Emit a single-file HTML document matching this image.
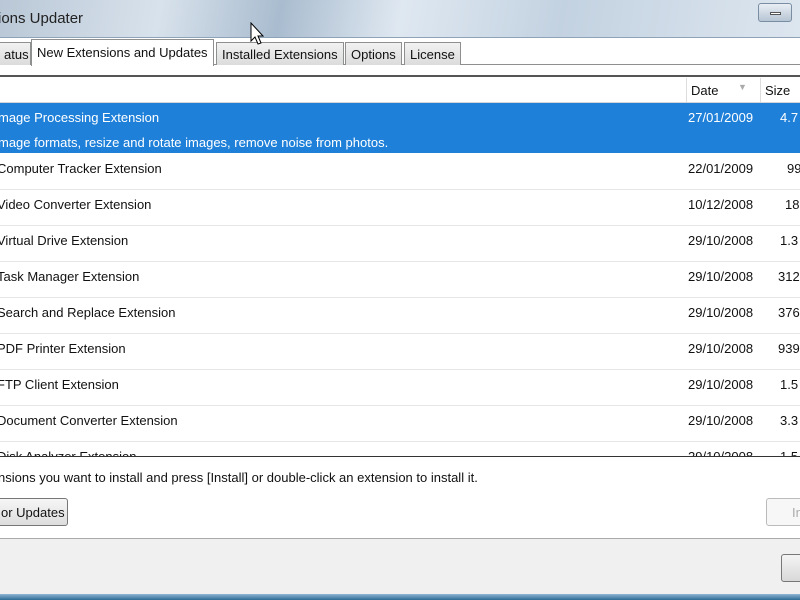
<!DOCTYPE html>
<html><head><style>
*{margin:0;padding:0;box-sizing:border-box}
body{width:800px;height:600px;overflow:hidden;font-family:"Liberation Sans",sans-serif;font-size:13px;color:#111;background:#fff;position:relative}
.abs{position:absolute;white-space:nowrap}
.title{left:0;top:0;width:800px;height:38px;background:linear-gradient(100deg,#b9c7d6 0%,#d8e2ec 20%,#a9bccf 35%,#dfe8f1 50%,#c3d2e1 70%,#dde6ef 100%);border-bottom:1px solid #8fa3b8}
.tab{top:42px;height:23px;border:1px solid #8e8f8f;border-bottom:none;background:linear-gradient(#f2f2f2,#dcdcdc);padding:4px 5px 0;font-size:13px}
.row{left:0;width:800px;height:36px;border-bottom:1px solid #e6e6e6}
</style></head><body>
<div class="abs title"></div>
<div class="abs" style="left:-2px;top:10px;font-size:15px;color:#222">ions Updater</div>
<div class="abs" style="left:758px;top:3px;width:34px;height:19px;border:1px solid #7a8ea3;border-radius:3px;background:linear-gradient(#e9eef4,#b7c5d4)"><div style="position:absolute;left:11px;top:8px;width:11px;height:3px;border:1px solid #555;background:#fff"></div></div>
<div class="abs" style="left:0;top:64px;width:800px;height:1px;background:#8e8f8f"></div>
<div class="abs tab" style="left:-2px;width:33px">atus</div>
<div class="abs tab" style="left:31px;top:39px;height:27px;background:#fff;padding-top:5px">New Extensions and Updates</div>
<div class="abs tab" style="left:216px">Installed Extensions</div>
<div class="abs tab" style="left:345px">Options</div>
<div class="abs tab" style="left:404px">License</div>
<div class="abs" style="left:0;top:75px;width:800px;height:2px;background:#555"></div>
<div class="abs" style="left:0;top:77px;width:800px;height:26px;background:#fff;border-bottom:1px solid #d5d5d5"></div>
<div class="abs" style="left:686px;top:78px;width:1px;height:24px;background:#ddd"></div>
<div class="abs" style="left:760px;top:78px;width:1px;height:24px;background:#ddd"></div>
<div class="abs" style="left:691px;top:83px">Date</div>
<div class="abs" style="left:738px;top:82px;color:#aaa;font-size:9px">▼</div>
<div class="abs" style="left:765px;top:83px">Size</div>
<div class="abs" style="left:0;top:103px;width:800px;height:50px;background:#1f80d9"></div>
<div class="abs" style="left:-2px;top:110px;color:#fff">mage Processing Extension</div>
<div class="abs" style="left:-2px;top:135px;color:#fff">mage formats, resize and rotate images, remove noise from photos.</div>
<div class="abs" style="left:688px;top:110px;color:#fff">27/01/2009</div>
<div class="abs" style="left:780px;top:110px;color:#fff">4.7</div>
<div class="abs row" style="top:154px"></div><div class="abs" style="left:-3px;top:161px">Computer Tracker Extension</div><div class="abs" style="left:688px;top:161px">22/01/2009</div><div class="abs" style="left:787px;top:161px">99</div>
<div class="abs row" style="top:190px"></div><div class="abs" style="left:-3px;top:197px">Video Converter Extension</div><div class="abs" style="left:688px;top:197px">10/12/2008</div><div class="abs" style="left:785px;top:197px">18</div>
<div class="abs row" style="top:226px"></div><div class="abs" style="left:-3px;top:233px">Virtual Drive Extension</div><div class="abs" style="left:688px;top:233px">29/10/2008</div><div class="abs" style="left:780px;top:233px">1.3</div>
<div class="abs row" style="top:262px"></div><div class="abs" style="left:-3px;top:269px">Task Manager Extension</div><div class="abs" style="left:688px;top:269px">29/10/2008</div><div class="abs" style="left:778px;top:269px">312</div>
<div class="abs row" style="top:298px"></div><div class="abs" style="left:-3px;top:305px">Search and Replace Extension</div><div class="abs" style="left:688px;top:305px">29/10/2008</div><div class="abs" style="left:778px;top:305px">376</div>
<div class="abs row" style="top:334px"></div><div class="abs" style="left:-3px;top:341px">PDF Printer Extension</div><div class="abs" style="left:688px;top:341px">29/10/2008</div><div class="abs" style="left:778px;top:341px">939</div>
<div class="abs row" style="top:370px"></div><div class="abs" style="left:-3px;top:377px">FTP Client Extension</div><div class="abs" style="left:688px;top:377px">29/10/2008</div><div class="abs" style="left:780px;top:377px">1.5</div>
<div class="abs row" style="top:406px"></div><div class="abs" style="left:-3px;top:413px">Document Converter Extension</div><div class="abs" style="left:688px;top:413px">29/10/2008</div><div class="abs" style="left:780px;top:413px">3.3</div>
<div class="abs" style="left:0;top:442px;width:800px;height:14px;overflow:hidden"><div class="abs" style="left:-3px;top:7px">Disk Analyzer Extension</div><div class="abs" style="left:688px;top:7px">29/10/2008</div><div class="abs" style="left:780px;top:7px">1.5</div></div>
<div class="abs" style="left:0;top:456px;width:800px;height:1px;background:#333"></div>
<div class="abs" style="left:-2px;top:470px">nsions you want to install and press [Install] or double-click an extension to install it.</div>
<div class="abs" style="left:-10px;top:498px;width:78px;height:28px;border:1px solid #777;border-radius:3px;background:linear-gradient(#f6f6f6,#ddd);padding:6px 0 0 10px">or Updates</div>
<div class="abs" style="left:766px;top:498px;width:40px;height:28px;border:1px solid #bbb;border-radius:3px;background:#f7f7f7;padding:6px 0 0 25px;color:#aaa">In</div>
<div class="abs" style="left:0;top:538px;width:800px;height:56px;background:#f0f0f0;border-top:1px solid #aaa"></div>
<div class="abs" style="left:781px;top:554px;width:30px;height:28px;border:1px solid #777;border-radius:3px;background:linear-gradient(#f4f4f4,#d8d8d8)"></div>
<div class="abs" style="left:0;top:594px;width:800px;height:6px;background:linear-gradient(#8fb5d3,#2f6b96)"></div>
<svg class="abs" style="left:250px;top:22px" width="16" height="26" viewBox="0 0 16 26"><path d="M1 1 L1 19 L5 15 L8 22 L11 21 L8 14 L13 14 Z" fill="#fff" stroke="#000" stroke-width="1"/></svg>
</body></html>
